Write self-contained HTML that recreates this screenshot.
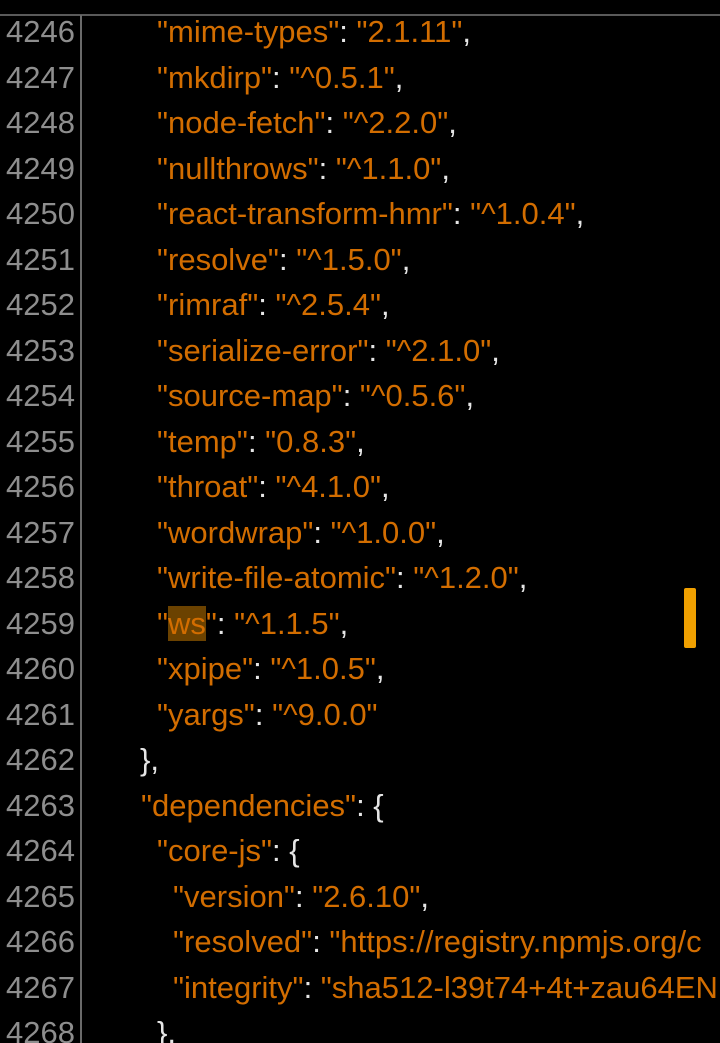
<!DOCTYPE html>
<html><head><meta charset="utf-8"><style>
html,body{margin:0;padding:0;background:#000;width:720px;height:1043px;overflow:hidden}
body{position:relative;font-family:"Liberation Sans",sans-serif;font-size:31px}
.top{position:absolute;left:0;top:14px;width:720px;height:2px;background:#5a5a5a}
.gut{position:absolute;left:80px;top:15px;width:2px;height:1028px;background:#6a6a6a}
.l{position:absolute;left:0;height:45.5px;line-height:45.5px;width:720px;white-space:pre;margin-top:1px;overflow:hidden}
.n{position:absolute;right:645px;color:#8e8e8e}
.c{position:absolute;color:#d26d00}
.p{color:#e6e6e6}
.hl{background:#6b4200}
.sb{position:absolute;left:684px;top:588px;width:12px;height:60px;background:#f0a000;border-radius:2px}
</style></head><body>
<div class="top"></div><div class="gut"></div>
<div class="l" style="top:8px"><span class="n">4246</span><span class="c" style="left:157px">"mime-types"<span class="p">: </span>"2.1.11"<span class="p">,</span></span></div>
<div class="l" style="top:53.5px"><span class="n">4247</span><span class="c" style="left:157px">"mkdirp"<span class="p">: </span>"^0.5.1"<span class="p">,</span></span></div>
<div class="l" style="top:99px"><span class="n">4248</span><span class="c" style="left:157px">"node-fetch"<span class="p">: </span>"^2.2.0"<span class="p">,</span></span></div>
<div class="l" style="top:144.5px"><span class="n">4249</span><span class="c" style="left:157px">"nullthrows"<span class="p">: </span>"^1.1.0"<span class="p">,</span></span></div>
<div class="l" style="top:190px"><span class="n">4250</span><span class="c" style="left:157px">"react-transform-hmr"<span class="p">: </span>"^1.0.4"<span class="p">,</span></span></div>
<div class="l" style="top:235.5px"><span class="n">4251</span><span class="c" style="left:157px">"resolve"<span class="p">: </span>"^1.5.0"<span class="p">,</span></span></div>
<div class="l" style="top:281px"><span class="n">4252</span><span class="c" style="left:157px">"rimraf"<span class="p">: </span>"^2.5.4"<span class="p">,</span></span></div>
<div class="l" style="top:326.5px"><span class="n">4253</span><span class="c" style="left:157px">"serialize-error"<span class="p">: </span>"^2.1.0"<span class="p">,</span></span></div>
<div class="l" style="top:372px"><span class="n">4254</span><span class="c" style="left:157px">"source-map"<span class="p">: </span>"^0.5.6"<span class="p">,</span></span></div>
<div class="l" style="top:417.5px"><span class="n">4255</span><span class="c" style="left:157px">"temp"<span class="p">: </span>"0.8.3"<span class="p">,</span></span></div>
<div class="l" style="top:463px"><span class="n">4256</span><span class="c" style="left:157px">"throat"<span class="p">: </span>"^4.1.0"<span class="p">,</span></span></div>
<div class="l" style="top:508.5px"><span class="n">4257</span><span class="c" style="left:157px">"wordwrap"<span class="p">: </span>"^1.0.0"<span class="p">,</span></span></div>
<div class="l" style="top:554px"><span class="n">4258</span><span class="c" style="left:157px">"write-file-atomic"<span class="p">: </span>"^1.2.0"<span class="p">,</span></span></div>
<div class="l" style="top:599.5px"><span class="n">4259</span><span class="c" style="left:157px">"<span class="hl">ws</span>"<span class="p">: </span>"^1.1.5"<span class="p">,</span></span></div>
<div class="l" style="top:645px"><span class="n">4260</span><span class="c" style="left:157px">"xpipe"<span class="p">: </span>"^1.0.5"<span class="p">,</span></span></div>
<div class="l" style="top:690.5px"><span class="n">4261</span><span class="c" style="left:157px">"yargs"<span class="p">: </span>"^9.0.0"</span></div>
<div class="l" style="top:736px"><span class="n">4262</span><span class="c p" style="left:140px">},</span></div>
<div class="l" style="top:781.5px"><span class="n">4263</span><span class="c" style="left:141px">"dependencies"<span class="p">: {</span></span></div>
<div class="l" style="top:827px"><span class="n">4264</span><span class="c" style="left:157px">"core-js"<span class="p">: {</span></span></div>
<div class="l" style="top:872.5px"><span class="n">4265</span><span class="c" style="left:173px">"version"<span class="p">: </span>"2.6.10"<span class="p">,</span></span></div>
<div class="l" style="top:918px"><span class="n">4266</span><span class="c" style="left:173px">"resolved"<span class="p">: </span>"https://registry.npmjs.org/c</span></div>
<div class="l" style="top:963.5px"><span class="n">4267</span><span class="c" style="left:173px">"integrity"<span class="p">: </span>"sha512-l39t74+4t+zau64EN</span></div>
<div class="l" style="top:1009px"><span class="n">4268</span><span class="c p" style="left:157px">},</span></div>
<div class="sb"></div>
</body></html>
